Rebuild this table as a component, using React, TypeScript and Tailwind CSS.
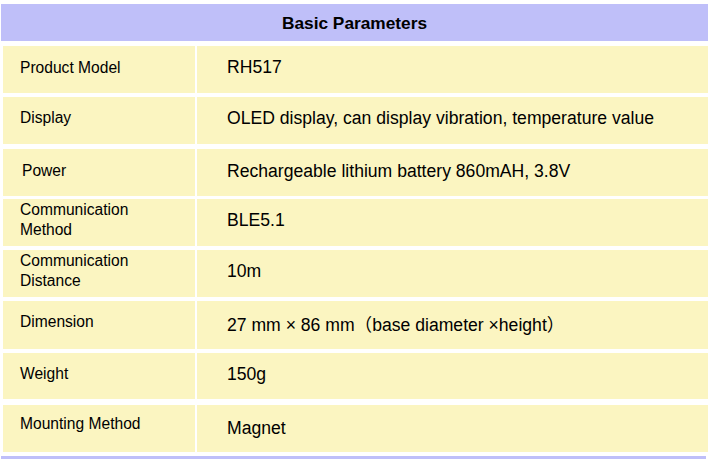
type Row = {
  label: string[];
  value: string;
  top: string;
  height: string;
  labelPad: string;
  valuePad: string;
  labelIndent?: string;
};

const rows: Row[] = [
  { label: ["Product Model"], value: "RH517", top: "mt-[5px]", height: "h-[47px]", labelPad: "pb-[4px]", valuePad: "pb-[5px]" },
  {
    label: ["Display"],
    value: "OLED display, can display vibration, temperature value",
    top: "mt-[4px]",
    height: "h-[47px]",
    labelPad: "pb-[6px]",
    valuePad: "pb-[5px]",
  },
  {
    label: ["Power"],
    value: "Rechargeable lithium battery 860mAH, 3.8V",
    top: "mt-[5px]",
    height: "h-[47px]",
    labelPad: "pb-[4px]",
    valuePad: "pb-[3px]",
    labelIndent: "pl-[19px]",
  },
  { label: ["Communication", "Method"], value: "BLE5.1", top: "mt-[3px]", height: "h-[47px]", labelPad: "pb-[5px]", valuePad: "pb-[5px]" },
  { label: ["Communication", "Distance"], value: "10m", top: "mt-[4px]", height: "h-[47px]", labelPad: "pb-[5px]", valuePad: "pb-[5px]" },
  {
    label: ["Dimension"],
    value: "27 mm × 86 mm（base diameter ×height）",
    top: "mt-[4px]",
    height: "h-[48px]",
    labelPad: "pb-[7px]",
    valuePad: "pb-0",
  },
  { label: ["Weight"], value: "150g", top: "mt-[4px]", height: "h-[46px]", labelPad: "pb-[4px]", valuePad: "pb-[4px]" },
  { label: ["Mounting Method"], value: "Magnet", top: "mt-[6px]", height: "h-[47px]", labelPad: "pb-[9px]", valuePad: "pb-[1px]" },
];

export default function App() {
  return (
    <div
      className="h-[459px] w-[709px] overflow-hidden bg-white pt-[4px] text-black"
      style={{ fontFamily: '"Liberation Sans", Arial, "Noto Sans CJK SC", sans-serif' }}
    >
      <div className="ml-[1px] flex h-[37px] w-[707px] items-center justify-center bg-[#bfbff9] text-[17.3px] font-bold leading-[20px]">
        Basic Parameters
      </div>

      <div className="flex flex-col">
        {rows.map((row) => (
          <div key={row.label.join(" ")} className={`ml-[3px] flex w-[705px] gap-[2px] ${row.top} ${row.height}`}>
            <div
              className={`flex w-[192px] flex-col justify-center bg-[#fbf5c1] text-[15.6px] leading-[19.7px] ${row.labelIndent ?? "pl-[17px]"} ${row.labelPad}`}
            >
              {row.label.map((line) => (
                <span key={line}>{line}</span>
              ))}
            </div>
            <div className={`flex flex-1 items-center bg-[#fbf5c1] pl-[30px] text-[17.6px] leading-[20px] ${row.valuePad}`}>
              {row.value}
            </div>
          </div>
        ))}
      </div>

      <div className="ml-[1px] mt-[4px] h-[3px] w-[705px] bg-[#bfbff9]" />
    </div>
  );
}
